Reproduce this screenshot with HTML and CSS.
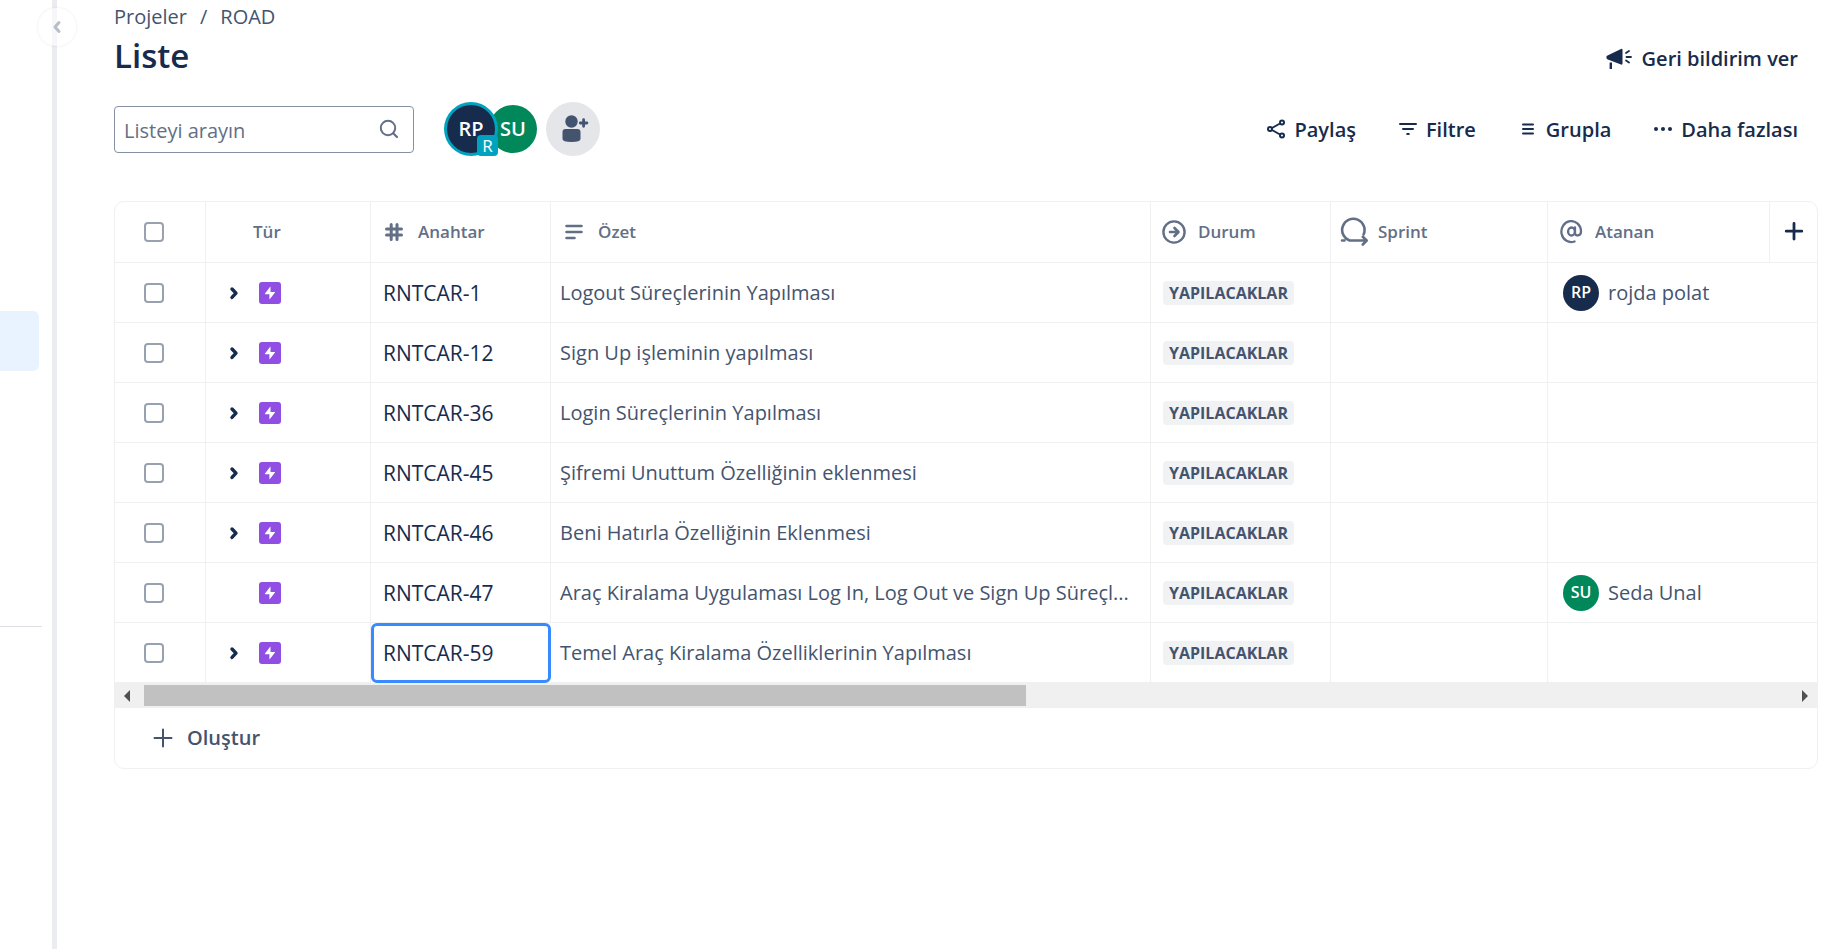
FILE: index.html
```html
<!DOCTYPE html>
<html lang="tr">
<head>
<meta charset="utf-8">
<title>Liste</title>
<link rel="stylesheet" href="styles.css">
</head>
<body>
<svg class="sprite" aria-hidden="true">
  <symbol id="chevron" viewBox="0 0 24 24"><path d="M10 8l4 4.200-4 4.200" fill="none" stroke="currentColor" stroke-width="3.400" stroke-linecap="round" stroke-linejoin="round"/></symbol>
  <symbol id="epic" viewBox="0 0 22 22"><rect width="22" height="22" rx="3" fill="#904ee2"/><path d="M11.500 5.200v4.800h4.200c.4 0 .5.300.300.600L10.900 17c-.2.300-.5.200-.5-.2V12.200H6.300c-.4 0-.5-.3-.3-.6L11 5c.2-.3.500-.2.500.2z" fill="#fff"/></symbol>
</svg>
<aside class="sidebar">
  <button class="collapse" aria-label="Kenar çubuğunu daralt"><svg viewBox="0 0 24 24" width="24" height="24"><path d="M14 7.500L10 12l4 4.500" fill="none" stroke="currentColor" stroke-width="3" stroke-linecap="round" stroke-linejoin="round"/></svg></button>
  <div class="side-item"></div>
  <hr class="side-line">
</aside>
<main class="main">
  <nav class="crumbs"><a href="#">Projeler</a><span>/</span><a href="#">ROAD</a></nav>
  <header class="head">
    <h1>Liste</h1>
    <button class="tool feedback"><svg viewBox="0 0 26 22" width="26" height="22"><path d="M1 7.800L15 1q1.500-.6 1.500 1v13.500q0 1.500-1.500 1L1.800 11.500Q.4 10.900.4 9.400T1 7.800z" fill="currentColor"/><path d="M4.800 14.500v6.500" stroke="currentColor" stroke-width="2.400"/><path d="M20 5l3-2M20.500 9h4.500M20 12.500l3 2" stroke="currentColor" stroke-width="1.800" stroke-linecap="round"/></svg>Geri bildirim ver</button>
  </header>
  <div class="bar">
    <label class="search">
      <input type="text" placeholder="Listeyi arayın" aria-label="Listeyi arayın">
      <svg viewBox="0 0 24 24" width="24" height="24"><circle cx="11" cy="11" r="7.200" fill="none" stroke="currentColor" stroke-width="2"/><path d="M16.200 16.200L20 20" stroke="currentColor" stroke-width="2.200" stroke-linecap="round"/></svg>
    </label>
    <div class="people">
      <button class="avatar navy active">RP<span class="badge">R</span></button>
      <button class="avatar green">SU</button>
      <button class="add-person" aria-label="Kişi ekle"><svg viewBox="0 0 32 32" width="32" height="32"><circle cx="14.500" cy="8.500" r="6.200" fill="currentColor"/><path d="M5.500 19q0-3 3-3h12q3 0 3 3v7q0 3-9 3t-9-3z" fill="currentColor"/><path d="M26.600 6.700v6.600M23.300 10h6.600" stroke="currentColor" stroke-width="2.800" stroke-linecap="round"/></svg></button>
    </div>
    <div class="tools">
      <button class="tool"><svg viewBox="0 0 24 24" width="24" height="24" fill="none" stroke="currentColor" stroke-width="2"><circle cx="6" cy="11" r="2"/><circle cx="18" cy="4.500" r="2"/><circle cx="18" cy="17.500" r="2"/><path d="M8 10l8-4.500M8 12l8 4.500"/></svg>Paylaş</button>
      <button class="tool"><svg viewBox="0 0 24 24" width="24" height="24" stroke="currentColor" stroke-width="2" stroke-linecap="round"><path d="M4 6h16M7 11h10M11.200 16h1.600"/></svg>Filtre</button>
      <button class="tool"><svg viewBox="0 0 24 24" width="24" height="24" stroke="currentColor" stroke-width="2" stroke-linecap="round"><path d="M7 6.500h10M7 11h10M7 15.500h10"/></svg>Grupla</button>
      <button class="tool"><svg viewBox="0 0 24 24" width="24" height="24" fill="currentColor"><circle cx="5" cy="11" r="2"/><circle cx="12" cy="11" r="2"/><circle cx="19" cy="11" r="2"/></svg>Daha fazlası</button>
    </div>
  </div>
  <section class="card">
    <table class="list">
      <colgroup><col class="c-check"><col class="c-type"><col class="c-key"><col><col class="c-status"><col class="c-sprint"><col class="c-user"><col class="c-add"></colgroup>
      <thead>
        <tr>
          <th><input type="checkbox" aria-label="Tümünü seç"></th>
          <th class="type-head">Tür</th>
          <th><div class="th"><svg viewBox="0 0 24 24" width="24" height="24" stroke="currentColor" stroke-width="3" stroke-linecap="round"><path d="M9.200 4.500v15M15 4.500v15M4.500 9h15M4.500 15h15"/></svg>Anahtar</div></th>
          <th><div class="th"><svg viewBox="0 0 24 24" width="24" height="24" stroke="currentColor" stroke-width="2.600" stroke-linecap="round"><path d="M4.500 6h15M4.500 12h15M4.500 18h8"/></svg>Özet</div></th>
          <th><div class="th"><svg viewBox="0 0 24 24" width="24" height="24" fill="none" stroke="currentColor" stroke-width="2.400" stroke-linecap="round" stroke-linejoin="round"><circle cx="12" cy="12" r="10.600"/><path d="M8 12h8M12.500 8l4 4-4 4" stroke-width="2.600"/></svg>Durum</div></th>
          <th><div class="th"><svg class="wide" viewBox="0 0 28 30" width="28" height="30" fill="none" stroke="currentColor" stroke-width="2.600" stroke-linecap="round" stroke-linejoin="round"><path d="M23.600 17.500A11.200 11.200 0 1 0 9.500 23.500H26.500M22.800 19.800l3.900 3.700-3.900 4M2 23.500h2.500"/></svg>Sprint</div></th>
          <th><div class="th"><svg viewBox="0 0 24 24" width="24" height="24" fill="none" stroke="currentColor" stroke-width="2.300" stroke-linecap="round"><ellipse cx="12.500" cy="11.500" rx="3.400" ry="4"/><path d="M16 7.500v5.500c0 3.600 6 3.200 6-1.500a9.800 10.500 0 1 0-6.500 10"/></svg>Atanan</div></th>
          <th class="add"><button aria-label="Sütun ekle"><svg viewBox="0 0 24 24" width="24" height="24" stroke="currentColor" stroke-width="2.800" stroke-linecap="round"><path d="M12 3.500v15.500M4.200 11.200h15.600"/></svg></button></th>
        </tr>
      </thead>
      <tbody>
        <tr><td><input type="checkbox" aria-label="RNTCAR-1"></td><td><div class="type"><button aria-label="Genişlet"><svg width="24" height="24"><use href="#chevron"/></svg></button><svg width="22" height="22"><use href="#epic"/></svg></div></td><td class="key"><a href="#">RNTCAR-1</a></td><td class="sum">Logout Süreçlerinin Yapılması</td><td class="status"><span>YAPILACAKLAR</span></td><td></td><td colspan="2"><div class="user"><span class="dot navy">RP</span>rojda polat</div></td></tr>
        <tr><td><input type="checkbox" aria-label="RNTCAR-12"></td><td><div class="type"><button aria-label="Genişlet"><svg width="24" height="24"><use href="#chevron"/></svg></button><svg width="22" height="22"><use href="#epic"/></svg></div></td><td class="key"><a href="#">RNTCAR-12</a></td><td class="sum">Sign Up işleminin yapılması</td><td class="status"><span>YAPILACAKLAR</span></td><td></td><td colspan="2"></td></tr>
        <tr><td><input type="checkbox" aria-label="RNTCAR-36"></td><td><div class="type"><button aria-label="Genişlet"><svg width="24" height="24"><use href="#chevron"/></svg></button><svg width="22" height="22"><use href="#epic"/></svg></div></td><td class="key"><a href="#">RNTCAR-36</a></td><td class="sum">Login Süreçlerinin Yapılması</td><td class="status"><span>YAPILACAKLAR</span></td><td></td><td colspan="2"></td></tr>
        <tr><td><input type="checkbox" aria-label="RNTCAR-45"></td><td><div class="type"><button aria-label="Genişlet"><svg width="24" height="24"><use href="#chevron"/></svg></button><svg width="22" height="22"><use href="#epic"/></svg></div></td><td class="key"><a href="#">RNTCAR-45</a></td><td class="sum">Şifremi Unuttum Özelliğinin eklenmesi</td><td class="status"><span>YAPILACAKLAR</span></td><td></td><td colspan="2"></td></tr>
        <tr><td><input type="checkbox" aria-label="RNTCAR-46"></td><td><div class="type"><button aria-label="Genişlet"><svg width="24" height="24"><use href="#chevron"/></svg></button><svg width="22" height="22"><use href="#epic"/></svg></div></td><td class="key"><a href="#">RNTCAR-46</a></td><td class="sum">Beni Hatırla Özelliğinin Eklenmesi</td><td class="status"><span>YAPILACAKLAR</span></td><td></td><td colspan="2"></td></tr>
        <tr><td><input type="checkbox" aria-label="RNTCAR-47"></td><td><div class="type leaf"><svg width="22" height="22"><use href="#epic"/></svg></div></td><td class="key"><a href="#">RNTCAR-47</a></td><td class="sum">Araç Kiralama Uygulaması Log In, Log Out ve Sign Up Süreçl...</td><td class="status"><span>YAPILACAKLAR</span></td><td></td><td colspan="2"><div class="user"><span class="dot green">SU</span>Seda Unal</div></td></tr>
        <tr><td><input type="checkbox" aria-label="RNTCAR-59"></td><td><div class="type"><button aria-label="Genişlet"><svg width="24" height="24"><use href="#chevron"/></svg></button><svg width="22" height="22"><use href="#epic"/></svg></div></td><td class="key selected"><a href="#">RNTCAR-59</a></td><td class="sum">Temel Araç Kiralama Özelliklerinin Yapılması</td><td class="status"><span>YAPILACAKLAR</span></td><td></td><td colspan="2"></td></tr>
      </tbody>
    </table>
    <div class="scroll">
      <button aria-label="Sola kaydır"><svg viewBox="0 0 6 12" width="6" height="12"><path d="M6 0v12L0 6z" fill="#505050"/></svg></button>
      <div class="track"><div class="thumb"></div></div>
      <button aria-label="Sağa kaydır"><svg viewBox="0 0 6 12" width="6" height="12"><path d="M0 0v12l6-6z" fill="#505050"/></svg></button>
    </div>
    <button class="create"><svg viewBox="0 0 24 24" width="24" height="24" stroke="currentColor" stroke-width="2" stroke-linecap="round"><path d="M12 3.500v17M3.500 12h17"/></svg>Oluştur</button>
  </section>
</main>
</body>
</html>
```
FILE: styles.css
```css
* { box-sizing: border-box; }
body {
  margin: 0;
  min-height: 100vh;
  display: flex;
  background: #fff;
  color: #172b4d;
  font: 20px/28px "Open Sans", "Noto Sans", sans-serif;
}
button {
  margin: 0;
  padding: 0;
  border: 0;
  background: none;
  color: inherit;
  font: inherit;
  display: flex;
  align-items: center;
  justify-content: center;
}
a { color: inherit; text-decoration: none; }
svg { flex: none; display: block; }
.sprite { position: absolute; width: 0; height: 0; }

.sidebar {
  position: relative;
  flex: none;
  width: 57px;
  padding-top: 311px;
  border-right: 5px solid #ebecf0;
}
.side-item { width: 39px; height: 60px; border-radius: 0 6px 6px 0; background: #e9f2ff; }
.side-line { width: 42px; height: 1px; margin: 255px 0 0; border: 0; background: #dcdfe4; }
.collapse {
  position: absolute;
  top: 8px;
  right: -24px;
  width: 38px;
  height: 38px;
  border-radius: 50%;
  background: rgba(255, 255, 255, .6);
  box-shadow: 0 0 2px 1px rgba(9, 30, 66, .05);
  color: #b9bec7;
}

.main { flex: 1; min-width: 0; padding: 3px 27px 0 57px; }
.crumbs { display: flex; gap: 13px; color: #44546f; }
.head { display: flex; align-items: center; justify-content: space-between; padding-right: 20px; }
h1 { margin: 3px 0 0; font-size: 33px; line-height: 44px; font-weight: 600; }
.tool { gap: 6px; font-weight: 600; }
.feedback { gap: 10px; margin-top: 8px; }

.bar { display: flex; align-items: center; margin-top: 24px; padding-right: 20px; height: 54px; }
.search {
  width: 300px;
  height: 47px;
  padding: 0 12px 0 9px;
  display: flex;
  align-items: center;
  border: 1px solid #8590a2;
  border-radius: 4px;
  color: #626f86;
}
.search input { flex: 1; min-width: 0; padding: 3px 0 0; border: 0; outline: 0; background: none; font: inherit; color: inherit; }
.search input::placeholder { color: #626f86; opacity: 1; }
.people { display: flex; align-items: center; margin-left: 33px; }
.avatar { width: 48px; height: 48px; border-radius: 50%; color: #fff; font-weight: 600; }
.avatar + .avatar { margin-left: -6px; }
.active { position: relative; z-index: 1; box-shadow: 0 0 0 3px #00a3bf; }
.badge {
  position: absolute;
  right: -3px;
  bottom: -3px;
  width: 21px;
  height: 21px;
  border-radius: 4px;
  background: #00a3bf;
  font-size: 17px;
  line-height: 22px;
  font-weight: 400;
}
.navy { background: #172b4d; }
.green { background: #00875a; }
.add-person { width: 54px; height: 54px; margin-left: 9px; border-radius: 50%; background: #e4e6ea; color: #44546f; }
.tools { display: flex; gap: 40px; margin-left: auto; padding-top: 2px; }

.card { margin-top: 45px; border: 1px solid #eff0f1; border-radius: 10px; overflow: hidden; }
.list { width: 100%; table-layout: fixed; border-collapse: separate; border-spacing: 0; }
.c-check { width: 91px; }
.c-type { width: 165px; }
.c-key, .c-status { width: 180px; }
.c-sprint { width: 217px; }
.c-user { width: 222px; }
.c-add { width: 47px; }
th, td { height: 60px; padding: 0; border-right: 1px solid #eff0f1; border-bottom: 1px solid #eff0f1; text-align: left; }
th { height: 61px; color: #626f86; font-size: 17px; font-weight: 600; }
th:last-child, td:last-child { border-right: 0; }
.list input {
  appearance: none;
  display: block;
  width: 20px;
  height: 20px;
  margin: 0 auto 0 29px;
  border: 2px solid #98a1b0;
  border-radius: 4px;
  background: #fff;
}
.th { display: flex; align-items: center; gap: 12px; padding-left: 11px; }
.wide { margin: 0 -2px; }
.type-head { padding-left: 47px; }
.add { color: #172b4d; }
.add button { width: 100%; }
.type { display: flex; align-items: center; gap: 13px; padding-left: 16px; }
.leaf { padding-left: 53px; }
.key { padding-left: 12px; font-size: 21px; font-weight: 500; }
.selected { outline: 3px solid #388bff; outline-offset: -3px; border-radius: 6px; }
.sum { padding: 0 8px 0 9px; color: #44546f; white-space: nowrap; overflow: hidden; text-overflow: ellipsis; }
.status { padding-left: 12px; }
.status span {
  display: block;
  width: max-content;
  padding: 0 6px;
  border-radius: 4px;
  background: #f1f2f4;
  color: #44546f;
  font-size: 16px;
  line-height: 24px;
  font-weight: 700;
}
.user { display: flex; align-items: center; gap: 9px; padding-left: 15px; color: #44546f; }
.dot { width: 36px; height: 36px; border-radius: 50%; color: #fff; font-size: 16px; line-height: 35px; font-weight: 600; text-align: center; }

.scroll { display: flex; height: 25px; background: #f0f0f0; }
.scroll button { width: 29px; padding-right: 6px; }
.scroll button:last-child { width: 25px; padding: 0; }
.track { flex: 1; padding: 2px 0; }
.thumb { width: 53.5%; height: 21px; background: #c1c1c1; }
.create { gap: 12px; width: 100%; height: 60px; padding-left: 36px; justify-content: flex-start; color: #44546f; font-weight: 600; }
```
